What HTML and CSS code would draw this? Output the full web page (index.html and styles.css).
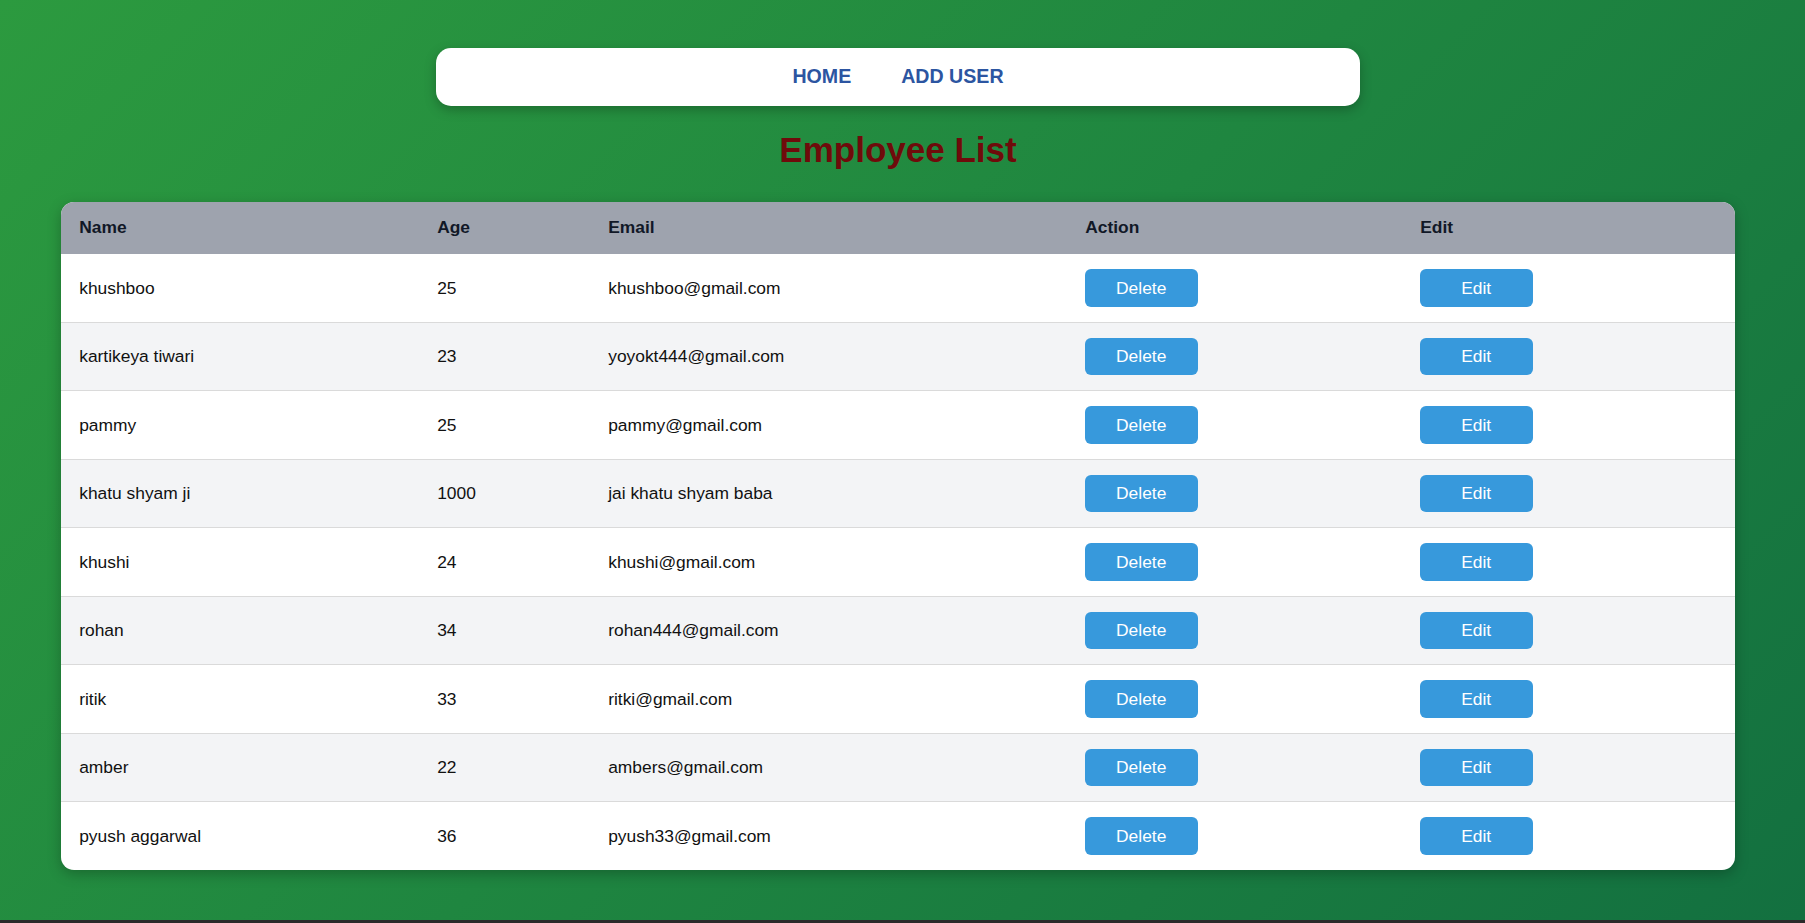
FILE: index.html
```html
<!DOCTYPE html>
<html lang="en">
<head>
<meta charset="utf-8">
<title>Employee List</title>
<link rel="stylesheet" href="styles.css">
</head>
<body>
<div class="page">
  <nav class="nav">
    <a class="nav-link" href="#">HOME</a>
    <a class="nav-link" href="#">ADD USER</a>
  </nav>
  <h1 class="title">Employee List</h1>
  <table class="emp-table">
    <colgroup>
      <col class="c-name"><col class="c-age"><col class="c-email"><col class="c-action"><col class="c-edit">
    </colgroup>
    <thead>
      <tr><th>Name</th><th>Age</th><th>Email</th><th>Action</th><th>Edit</th></tr>
    </thead>
    <tbody>
      <tr><td>khushboo</td><td>25</td><td>khushboo@gmail.com</td><td><button class="btn">Delete</button></td><td><button class="btn">Edit</button></td></tr>
      <tr><td>kartikeya tiwari</td><td>23</td><td>yoyokt444@gmail.com</td><td><button class="btn">Delete</button></td><td><button class="btn">Edit</button></td></tr>
      <tr><td>pammy</td><td>25</td><td>pammy@gmail.com</td><td><button class="btn">Delete</button></td><td><button class="btn">Edit</button></td></tr>
      <tr><td>khatu shyam ji</td><td>1000</td><td>jai khatu shyam baba</td><td><button class="btn">Delete</button></td><td><button class="btn">Edit</button></td></tr>
      <tr><td>khushi</td><td>24</td><td>khushi@gmail.com</td><td><button class="btn">Delete</button></td><td><button class="btn">Edit</button></td></tr>
      <tr><td>rohan</td><td>34</td><td>rohan444@gmail.com</td><td><button class="btn">Delete</button></td><td><button class="btn">Edit</button></td></tr>
      <tr><td>ritik</td><td>33</td><td>ritki@gmail.com</td><td><button class="btn">Delete</button></td><td><button class="btn">Edit</button></td></tr>
      <tr><td>amber</td><td>22</td><td>ambers@gmail.com</td><td><button class="btn">Delete</button></td><td><button class="btn">Edit</button></td></tr>
      <tr><td>pyush aggarwal</td><td>36</td><td>pyush33@gmail.com</td><td><button class="btn">Delete</button></td><td><button class="btn">Edit</button></td></tr>
    </tbody>
  </table>
</div>
</body>
</html>
```
FILE: styles.css
```css
html {
  background: #2a2a2a;
}
body {
  margin: 0;
  font-family: "Liberation Sans", Arial, sans-serif;
}
.page {
  box-sizing: border-box;
  min-height: 920px;
  padding: 48px 70px 0 61px;
  background: linear-gradient(135deg, #2c9a3f 0%, #1f8640 50%, #137040 100%);
  display: flex;
  flex-direction: column;
  align-items: center;
}
.nav {
  box-sizing: border-box;
  width: 924px;
  height: 58px;
  background: #fff;
  border-radius: 15px;
  box-shadow: 0 4px 12px rgba(0, 0, 0, 0.25);
  display: flex;
  justify-content: center;
  align-items: center;
  gap: 50px;
  padding-bottom: 2px;
}
.nav-link {
  font-size: 19.6px;
  font-weight: bold;
  color: #2c55a1;
  text-decoration: none;
}
.title {
  margin: 24px 0 32px;
  font-size: 35px;
  line-height: 40px;
  font-weight: bold;
  color: #6f0b0b;
}
.emp-table {
  width: 100%;
  table-layout: fixed;
  border-collapse: separate;
  border-spacing: 0;
  background: #fff;
  border-radius: 13px;
  overflow: hidden;
  box-shadow: 0 4px 14px rgba(0, 0, 0, 0.25);
  font-size: 17.4px;
  color: #111;
}
.c-name { width: 358px; }
.c-age { width: 171px; }
.c-email { width: 477px; }
.c-action { width: 335px; }
.c-edit { width: 333px; }
.emp-table th {
  background: #9ea3ae;
  color: #111827;
  font-weight: bold;
  text-align: left;
  padding: 15px 17.6px 17px 18.2px;
  line-height: 20px;
}
.emp-table td {
  padding: 15px 17.6px 15px 18.2px;
  line-height: 20px;
  border-bottom: 1px solid #dadada;
}
.emp-table tbody tr:nth-child(even) td {
  background: #f3f4f6;
}
.emp-table tbody tr:last-child td {
  border-bottom: none;
}
.btn {
  box-sizing: border-box;
  width: 113px;
  height: 37.5px;
  margin-left: -0.5px;
  border: none;
  border-radius: 6px;
  background: #3799dc;
  color: #fff;
  font-family: "Liberation Sans", Arial, sans-serif;
  font-size: 17.4px;
  line-height: 20px;
  padding: 0;
  cursor: pointer;
}
```
